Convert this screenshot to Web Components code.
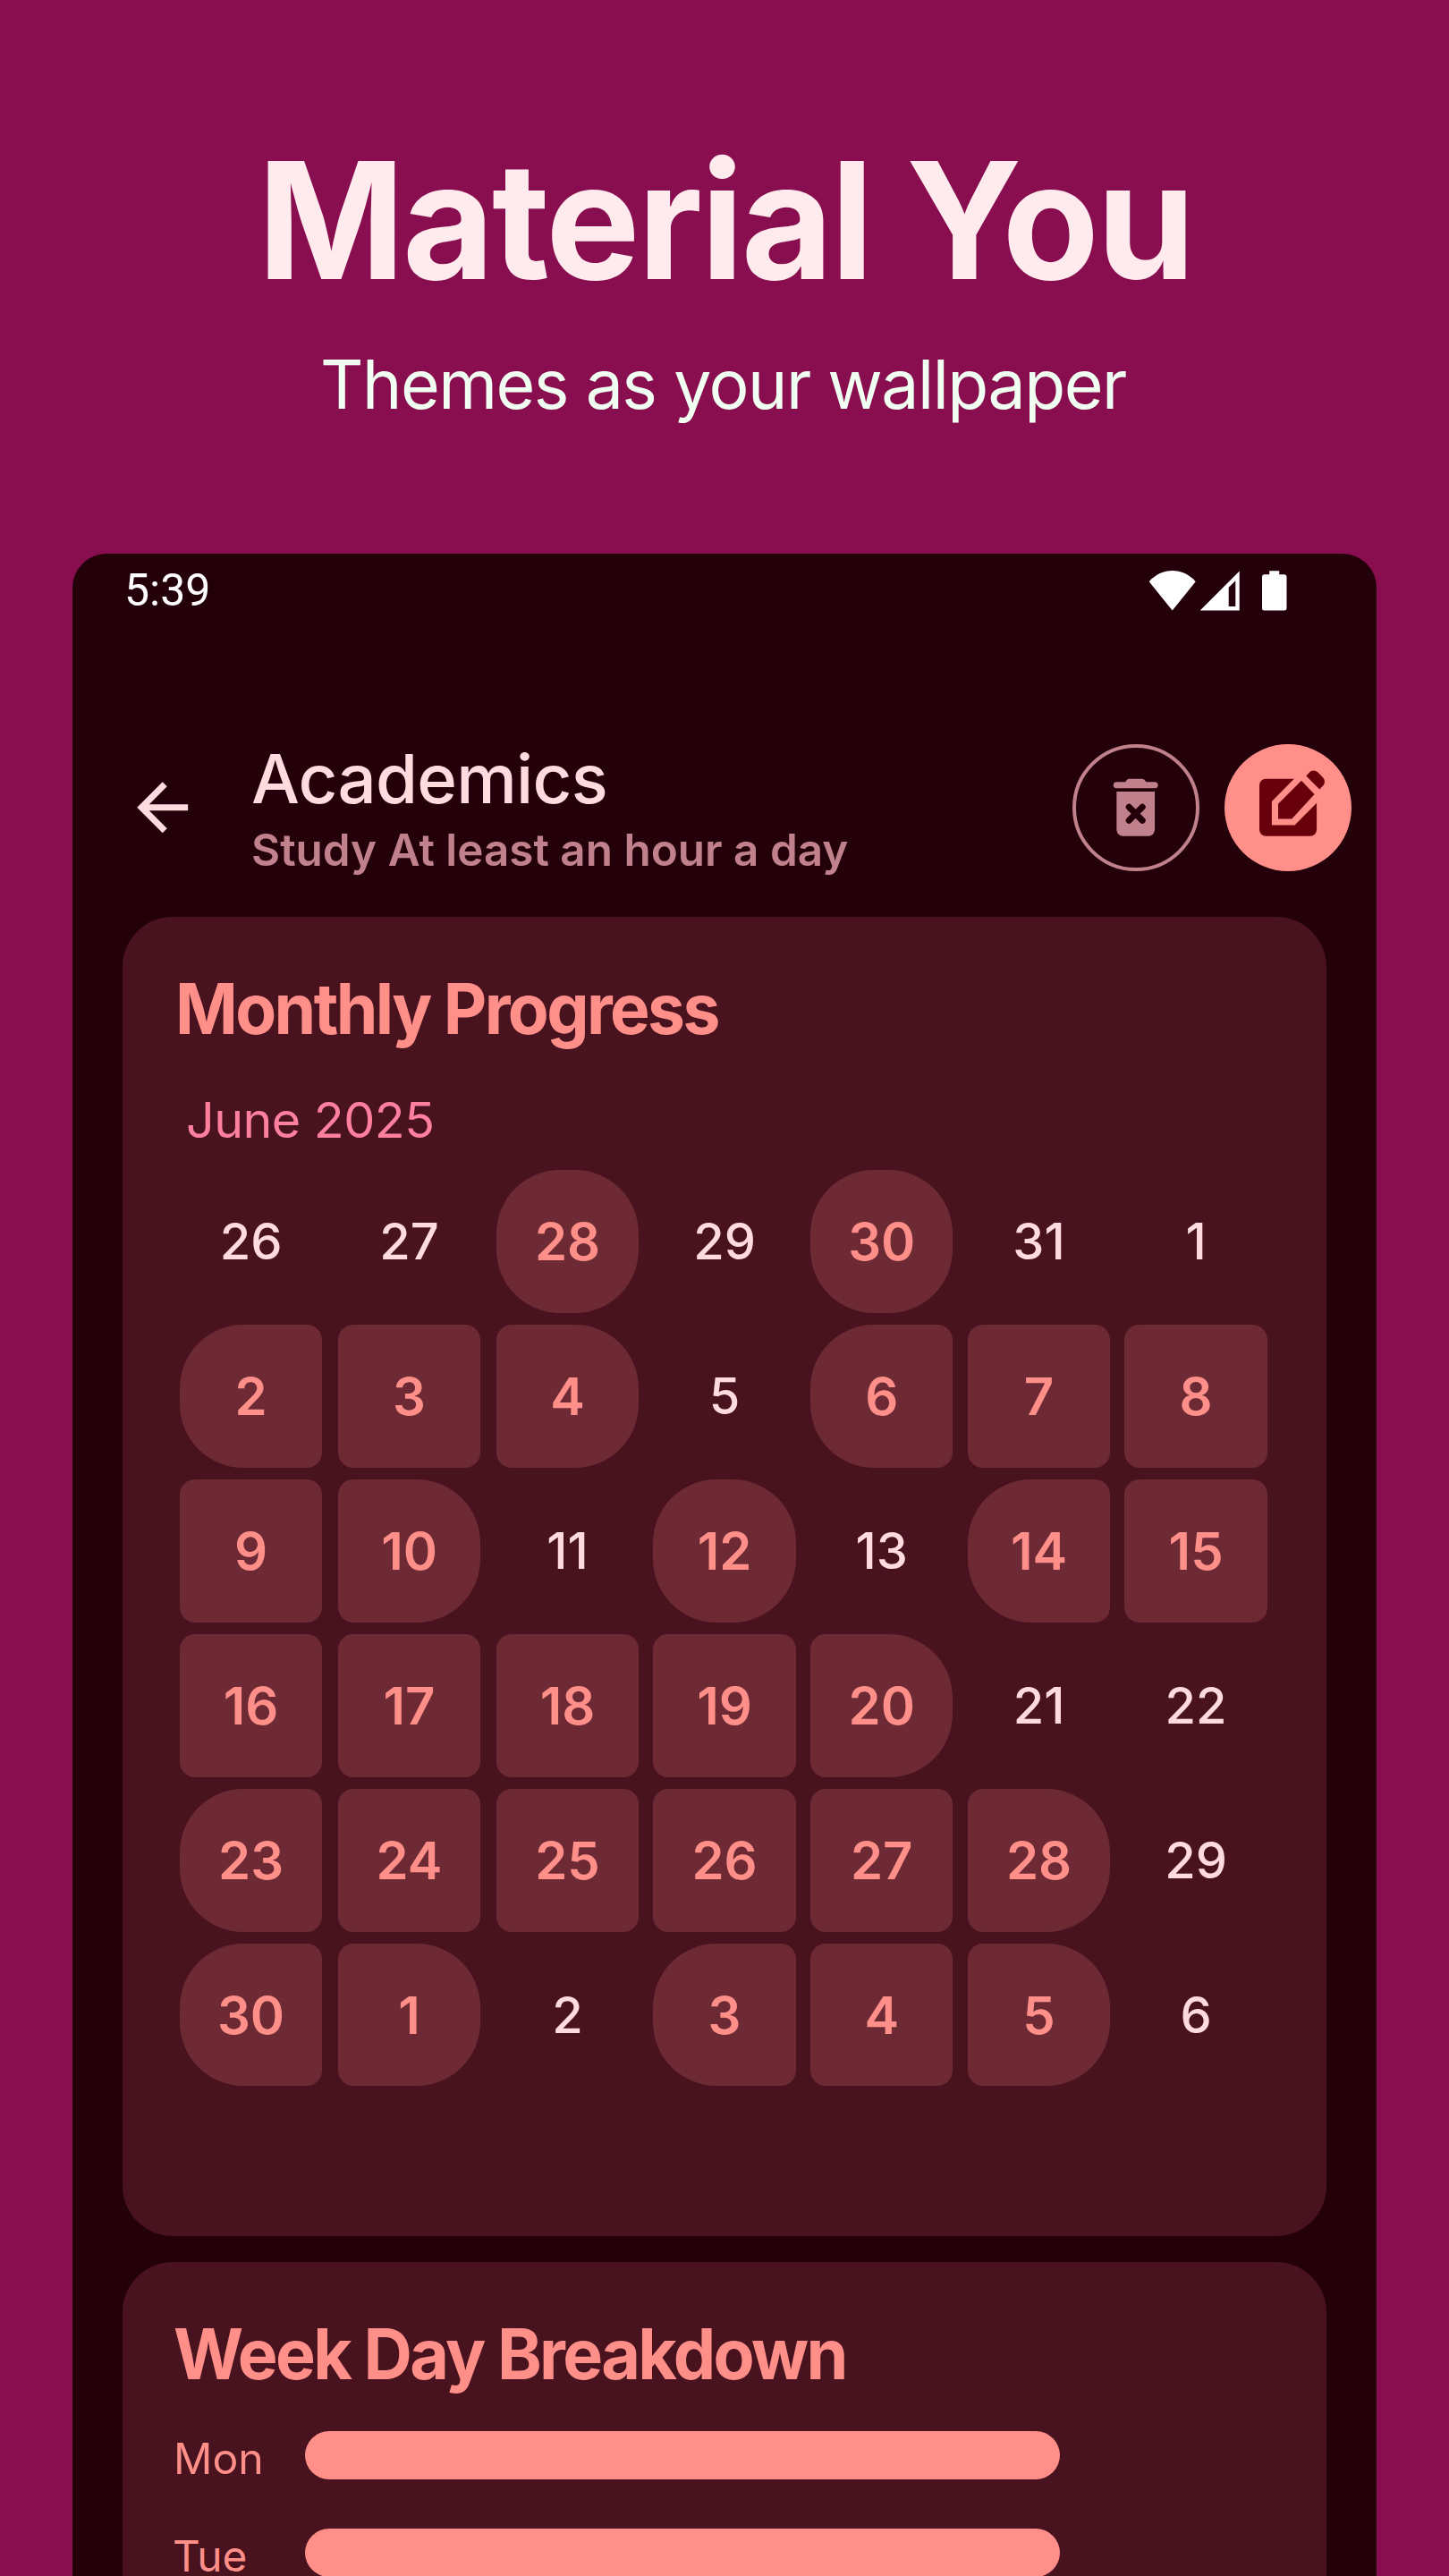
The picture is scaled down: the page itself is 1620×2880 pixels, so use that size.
<!DOCTYPE html>
<html lang="en">
<head>
<meta charset="utf-8">
<title>Material You</title>
<style>
  html, body { margin: 0; padding: 0; }
  body {
    width: 1620px; height: 2880px; overflow: hidden;
    background: #880e4f;
    font-family: Inter, "Liberation Sans", sans-serif;
    --surface: #23000a; --card: #48121f; --cell: #6d2a34;
    --primary: #ff8f88; --on-primary: #68000c; --text: #ffdade;
    --muted: #c0808c; --tertiary: #ff7f9e;
  }
</style>
</head>
<body>
<promo-page></promo-page>
<script>
const define = (name, html, setup) => {
  const tpl = document.createElement('template');
  tpl.innerHTML = html;
  customElements.define(name, class extends HTMLElement {
    connectedCallback() {
      if (this.shadowRoot) return;
      this.attachShadow({ mode: 'open' }).append(tpl.content.cloneNode(true));
      if (setup) setup(this, this.shadowRoot);
    }
  });
};

/* A single line whose ink spans exactly `ink` pixels. */
const ctx = document.createElement('canvas').getContext('2d');
define('fit-text', `
  <style>
    :host { display: flex; white-space: nowrap; }
    span { display: block; flex: none; transform-origin: 0 50%; }
  </style><span></span>`, (host, root) => {
  const span = root.querySelector('span');
  const [size, weight, ink, track] = ['size', 'weight', 'ink', 'track'].map(k => +(host.getAttribute(k) || 0));
  const text = host.getAttribute('text');
  span.textContent = text;
  ctx.font = weight + ' ' + size + 'px Inter, "Liberation Sans", sans-serif';
  ctx.letterSpacing = track * size + 'px';
  const m = ctx.measureText(text);
  const k = ink / (m.actualBoundingBoxRight + m.actualBoundingBoxLeft);
  host.style.width = ink + 'px';
  span.style.cssText = 'font-size:' + size + 'px;font-weight:' + weight +
    ';letter-spacing:' + track + 'em;margin-left:' + (m.actualBoundingBoxLeft * k) + 'px;transform:scaleX(' + k + ')';
});

define('promo-header', `
  <style>
    :host { display: flex; flex-direction: column; align-items: center; padding-top: 147px; height: 331.5px; }
    .t { color: #ffebee; line-height: 200px; margin-left: 5px; }
    .s { color: #f1fff2; line-height: 100px; margin-top: 32.5px; }
  </style>
  <fit-text class="t" text="Material You" size="181" weight="700" ink="1027" track="-0.015"></fit-text>
  <fit-text class="s" text="Themes as your wallpaper" size="75.5" weight="400" ink="898" track="-0.02"></fit-text>`);

define('status-bar', `
  <style>
    :host { display: flex; align-items: center; height: 83px; padding: 0 100px 0 58px; color: #fff; }
    span { flex: 1; font: 400 50px/83px Roboto, sans-serif; }
    svg { display: block; fill: #fff; height: 45px; }
  </style>
  <span>5:39</span>
  <svg width="155" height="45" viewBox="0 0 155 45">
    <path d="M0.700 12.300C14.700-4 38.700-4 52.700 12.300L26.700 44.500z"/>
    <path fill-rule="evenodd" d="M57.700 44.500L101.700 .5V44.500zM89.700 18.800V40H97.300V11.200z"/>
    <path d="M135.200 .2H146.200V4.300H151.500Q154.500 4.300 154.500 7.300V42Q154.500 44.500 151.500 44.500H129.500Q127 44.500 127 42V7.300Q127 4.300 129.500 4.300H135.200z"/>
  </svg>`);

define('round-button', `
  <style>
    :host { display: flex; align-items: center; justify-content: center; box-sizing: border-box;
            width: 142px; height: 142px; border-radius: 50%; flex: none; }
    :host([kind=outlined]) { border: 4px solid var(--muted); color: var(--muted); }
    :host([kind=filled]) { background: var(--primary); color: var(--on-primary); }
  </style><slot></slot>`);

define('app-bar', `
  <style>
    :host { display: flex; align-items: center; height: 160px; margin: 121px 28px 42px 58px; }
    svg { display: block; width: 85.400px; height: 85.400px; fill: currentColor; flex: none; }
    .back { color: var(--text); }
    .titles { flex: 1; margin-left: 57.500px; }
    .a { color: var(--text); line-height: 95.200px; }
    .b { color: var(--muted); line-height: 64.400px; margin-left: 1px; }
    round-button + round-button { margin-left: 28px; }
  </style>
  <svg class="back" viewBox="0 0 24 24"><path d="M7.825 13l5.600 5.600L12 20l-8-8 8-8 1.425 1.400-5.600 5.600H20v2z"/></svg>
  <div class="titles">
    <fit-text class="a" text="Academics" size="75.5" weight="450" ink="395" track="-0.01"></fit-text>
    <fit-text class="b" text="Study At least an hour a day" size="50" weight="600" ink="665"></fit-text>
  </div>
  <round-button kind="outlined">
    <svg viewBox="0 0 24 24">
      <path fill-rule="evenodd" d="M6 6a1 1 0 0 1 0-2H8.700L9.300 3.300Q9.600 3 10 3H14Q14.400 3 14.700 3.300L15.300 4H18a1 1 0 0 1 0 2zM6 7H18V19a2 2 0 0 1-2 2H8a2 2 0 0 1-2-2z"/>
      <path d="M9.900 11.900l4.200 4.200m0-4.200l-4.200 4.200" stroke="#23000a" stroke-width="2" stroke-linecap="round" fill="none"/>
    </svg>
  </round-button>
  <round-button kind="filled">
    <svg viewBox="0 0 24 24" style="overflow:visible">
      <path d="M5 3H14L7 10.100V17.600H14.200L21.100 10.600V19a2 2 0 0 1-2 2H5.100a2 2 0 0 1-2-2V5a2 2 0 0 1 2-2z"/>
      <path d="M9 10.900L16.300 3.600L20.400 7.900L13.300 15.600H9z"/>
      <path d="M17.800 2.100L18.700 1.100C19.500.200 20.700.200 21.500 1L23 2.500C23.800 3.300 23.800 4.500 23 5.300L22 6.300z"/>
    </svg>
  </round-button>`);

define('stat-card', `
  <style>
    :host { display: block; box-sizing: border-box; background: var(--card); border-radius: 56px;
            margin: 0 56px; padding: 53.700px 0 0 58px; }
    ::slotted([slot=title]) { color: var(--primary); line-height: 100px; }
  </style>
  <slot name="title"></slot><slot></slot>`);

define('day-cell', `
  <style>
    :host { display: flex; align-items: center; justify-content: center; width: 159.300px; height: 159.700px;
            color: var(--text); font-size: 56px; font-weight: 450; line-height: 1; box-sizing: border-box; }
    :host([done]) { background: var(--cell); color: var(--primary); font-size: 58px; font-weight: 630;
            border-radius: var(--l) var(--r) var(--r) var(--l); --l: 17px; --r: 17px; }
    :host([start]) { --l: 71px !important; }
    :host([end]) { --r: 71px !important; }
  </style><slot></slot>`);

define('month-grid', `
  <style>
    :host { display: grid; grid-template-columns: 177px 177px 175.500px 175.700px 175.800px 175.600px 159.300px;
            row-gap: 13.300px; margin: 21.200px 0 0 5.900px; }
  </style>`, (host, root) => {
  // Completed runs are bracketed; a run may continue across the week boundary.
  const days = '26 27 [28] 29 [30] 31 1 [2 +3 4] 5 [6 +7 +8 +9 10] 11 [12] 13 [14 +15 +16 +17 +18 +19 20] 21 22 [23 +24 +25 +26 +27 28] 29 [30 1] 2 [3 +4 5] 6';
  for (const d of days.split(' ')) {
    const cell = document.createElement('day-cell');
    cell.textContent = d.replace(/\D/g, '');
    if (/\D/.test(d)) cell.setAttribute('done', '');
    if (d.includes('[')) cell.setAttribute('start', '');
    if (d.includes(']')) cell.setAttribute('end', '');
    root.append(cell);
  }
});

define('day-bar', `
  <style>
    :host { display: flex; align-items: center; height: 54px; margin-bottom: 55px; color: var(--primary); }
    .label { width: 146px; line-height: 44px; padding-top: 8px; }
    .bar { width: 844.300px; height: 54px; border-radius: 27px; background: var(--primary); }
  </style>
  <div class="label"><slot></slot></div><div class="bar"></div>`);

define('phone-frame', `
  <style>
    :host { display: block; box-sizing: border-box; width: 1458px; height: 2400px; margin: 140px auto 0;
            background: var(--surface); border-radius: 38px 38px 0 0; }
    .month { height: 1475.800px; margin-bottom: 28.400px; }
    .week { height: 500px; }
    .june { color: var(--tertiary); line-height: 70px; margin: 38.500px 0 0 15px; }
  </style>
  <status-bar></status-bar>
  <app-bar></app-bar>
  <stat-card class="month">
    <fit-text slot="title" text="Monthly Progress" size="78" weight="650" ink="602" track="-0.035" style="margin-left:5.500px"></fit-text>
    <fit-text class="june" text="June 2025" size="55" weight="400" ink="273.5" track="-0.01"></fit-text>
    <month-grid></month-grid>
  </stat-card>
  <stat-card class="week">
    <fit-text slot="title" text="Week Day Breakdown" size="78" weight="650" ink="749" track="-0.035" style="margin-bottom:35.500px"></fit-text>
    <day-bar><fit-text text="Mon" size="48" weight="400" ink="93.3" style="margin-left:3px"></fit-text></day-bar>
    <day-bar><fit-text text="Tue" size="48" weight="400" ink="79.5"></fit-text></day-bar>
  </stat-card>`);

define('promo-page', `
  <style>:host { display: block; height: 2880px; overflow: hidden; }</style>
  <promo-header></promo-header>
  <phone-frame></phone-frame>`);
</script>
</body>
</html>
